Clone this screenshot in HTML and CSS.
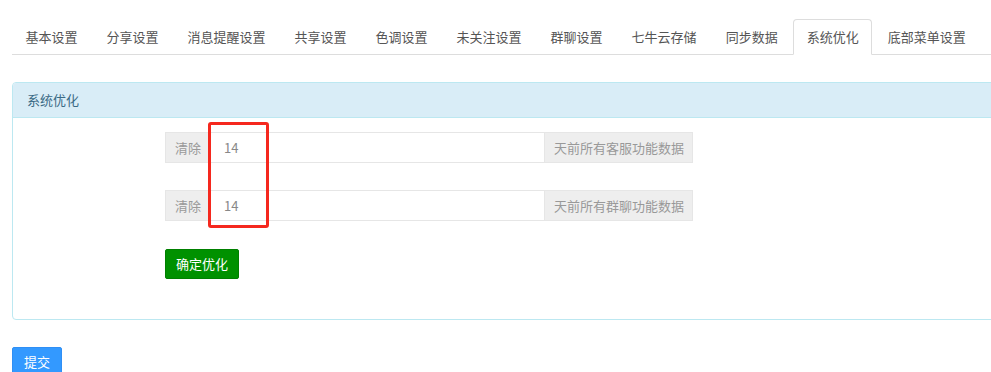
FILE: index.html
```html
<!DOCTYPE html>
<html lang="zh-CN">
<head>
<meta charset="utf-8">
<title>系统优化</title>
<link rel="stylesheet" href="styles.css">
</head>
<body>
<div class="page">
  <ul class="tabs">
    <li class="tab">基本设置</li>
    <li class="tab">分享设置</li>
    <li class="tab">消息提醒设置</li>
    <li class="tab">共享设置</li>
    <li class="tab">色调设置</li>
    <li class="tab">未关注设置</li>
    <li class="tab">群聊设置</li>
    <li class="tab">七牛云存储</li>
    <li class="tab">同步数据</li>
    <li class="tab active">系统优化</li>
    <li class="tab">底部菜单设置</li>
  </ul>

  <div class="panel">
    <div class="panel-heading">系统优化</div>
    <div class="panel-body">
      <div class="input-group">
        <span class="addon addon-left">清除</span>
        <input class="field" type="text" value="14">
        <span class="addon addon-right">天前所有客服功能数据</span>
      </div>
      <div class="input-group">
        <span class="addon addon-left">清除</span>
        <input class="field" type="text" value="14">
        <span class="addon addon-right">天前所有群聊功能数据</span>
      </div>
      <button class="btn-green" type="button">确定优化</button>
      <div class="highlight"></div>
    </div>
  </div>

  <button class="btn-submit" type="button">提交</button>
</div>
</body>
</html>
```

FILE: styles.css
```css
* {
  box-sizing: border-box;
}

html, body {
  margin: 0;
  padding: 0;
  background: #fff;
  overflow: hidden;
}

body {
  font-family: "Noto Sans CJK SC", "Microsoft YaHei", "Noto Sans", sans-serif;
  font-size: 13px;
  color: #555;
}

.page {
  padding: 19px 0 0 12px;
  width: 100%;
}

.tabs {
  display: flex;
  list-style: none;
  margin: 0 -20px 0 0;
  padding: 0;
  border-bottom: 1px solid #ddd;
}

.tab {
  height: 36px;
  line-height: 34px;
  padding: 0 12.5px;
  margin-right: 2px;
  margin-bottom: -1px;
  border: 1px solid transparent;
  border-radius: 4px 4px 0 0;
  color: #555;
  white-space: nowrap;
}

.tab.active {
  border-color: #ddd #ddd transparent;
  background: #fff;
  color: #555;
}

.panel {
  margin-top: 27px;
  margin-right: -20px;
  border: 1px solid #bce8f1;
  border-radius: 4px;
  background: #fff;
}

.panel-heading {
  height: 35px;
  line-height: 34px;
  padding: 0 14px;
  background: #d9edf7;
  border-bottom: 1px solid #bce8f1;
  border-radius: 3px 3px 0 0;
  color: #3a6a85;
}

.panel-body {
  position: relative;
  padding: 14px 0 40px 152px;
  display: flex;
  flex-direction: column;
  align-items: flex-start;
}

.input-group {
  display: flex;
  width: 528px;
  height: 31px;
  margin-bottom: 27px;
}

.addon {
  display: flex;
  align-items: center;
  background: #eee;
  border: 1px solid #e6e6e6;
  color: #999;
  white-space: nowrap;
}

.addon-left {
  padding: 0 9px;
  border-right: 0;
}

.addon-right {
  padding: 0 8px 0 9px;
  border-left: 0;
}

.field {
  flex: 1;
  min-width: 0;
  height: 31px;
  padding: 0 13px;
  border: 1px solid #e6e6e6;
  font-family: "Noto Sans CJK SC", "Noto Sans", sans-serif;
  font-size: 13px;
  color: #888;
  background: #fff;
  outline: none;
}

.btn-green {
  margin-top: 1px;
  height: 30px;
  padding: 0 10px;
  border: 1px solid #008000;
  border-radius: 2px;
  background: #009100;
  color: #fff;
  font-family: "Noto Sans CJK SC", "Noto Sans", sans-serif;
  font-size: 13px;
  line-height: 28px;
}

.highlight {
  position: absolute;
  left: 195px;
  top: 4px;
  width: 61px;
  height: 106px;
  border: 3px solid #f5281e;
  border-radius: 3px;
}

.btn-submit {
  margin-top: 27px;
  height: 30px;
  padding: 0 11px;
  border: 1px solid #2f8ff5;
  border-radius: 2px;
  background: #3399ff;
  color: #fff;
  font-family: "Noto Sans CJK SC", "Noto Sans", sans-serif;
  font-size: 13px;
  line-height: 28px;
}
```
